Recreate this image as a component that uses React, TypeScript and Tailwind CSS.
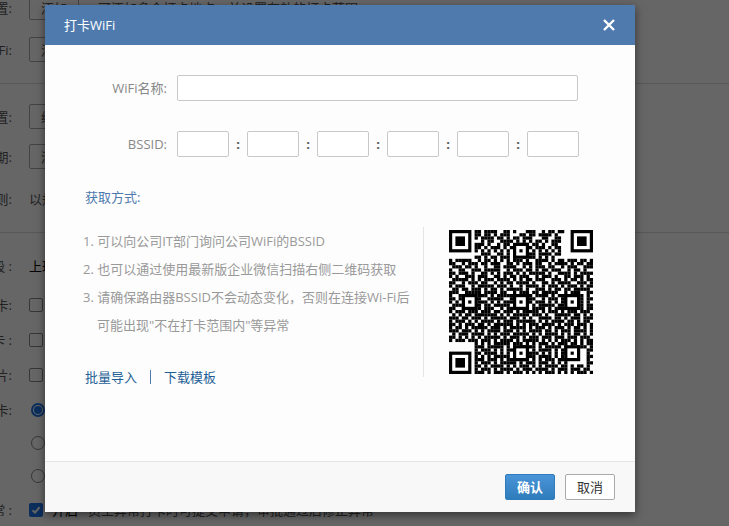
import React from "react";

const FONT = { fontFamily: '"Open Sans","Noto Sans CJK SC",sans-serif' };

const QR_ROWS = [
  "........##.####..##.#...###..#.##.##.........",
  "........##.##.#.###...##.##.####.#...........",
  "........#.####.##.#.##.###...##..##..........",
  "..........#.##..####.#.#.#.##.#.###..........",
  "........###.#..#.##...###.##.#..##...........",
  "........##.#.###.#.#..##.#.###.#.##..........",
  "........#.#.#.#.#.#.#.#.#.#.#.#.#.#..........",
  "..........###..##.#.###.###.####.##..........",
  "........##.#.##.###.#..#.##.#.#.#............",
  "#.#####..#.##.#.#.#.###.#..####.#.##.###.##.#",
  "##..#.###.##.###..##.#.###.##..#.####.#.##.##",
  ".###.##.#..#..##.####..#.#.###.##..#.###..###",
  "#..##..###.#####..#.###.##.#.##.###..#.##.#..",
  "##.###.#..##.#.#.###.#.#.#####.#..####.#.####",
  "#.#..###.###..##.#.##.###..#.###.#..##.###.#.",
  ".#####.#.#.###.####.#.#.##.###..###.#.##.#.##",
  "##..#.###.##..#.#.##.####.#..##.#.####..###.#",
  "#.###..#.#####.###.#..#.####.#.###.#.###.#.##",
  ".##.##.###.#.##.#.#####.#..###.#.##.##.#####.",
  "###..#####.####.##..#.###.##.#####..#.###..##",
  "#..##.#..###.#.#####.###.#.####.#.###.#.##.#.",
  "##.####.##..#####..#.#.####..#.###.##.####.##",
  "#.#..#.#.###.#.#.####..#.#.###.#.#.#####.#.#.",
  ".###.#####.##.#####.#.###.#.#####.##.#.###.##",
  "##..##.#.#.###..#.####.##.####.#.####.##.#.##",
  "#.###.###.###.##.###.#.#####.#.###.#.###.###.",
  ".#.#.##.#######.#.#.#####.###.#..#####.##.#.#",
  "###.##.###.#.#####.###.#.#..####.##.#.###.###",
  "#.###.#.#.####.#.###.######.#.#.####.##.#.##.",
  "##.#.###.##.#.######.#.#.###.####.#.###.###.#",
  "#.##.#.#####.###.#.#####.#.###.#.###.#.##.#.#",
  "###.###.#.#.####.###.#.#.####.##.#.###.####.#",
  ".#.###.####.#.#.###.#####.#.#.####.#.#.##.#.#",
  "##.#.#.#.#.#####.#.###.#.###.###.###.###.###.",
  "#.###.###.###.#.####.#.#####.#.#.#.###.#.#.##",
  "........#.#.#.#####.###.#.#.###.#.###.##.#.##",
  "........###.#####.#.#.#####.#.#####.#.#.###.#",
  "........#.###.#.#.###.#.#.#.####.#.###.....##",
  "........##.####.#.#.####.###.#.#.#.###.....#.",
  "........#.#.#.#####.#.#.###.####.#.#.#.....##",
  "........###.###.#.###.###.#.#.###.###......#.",
  "........#.###.#.#####.#.###.###.#.#.#......##",
  "........##.#.####.#.#.###.#.#.####.##.#.##.#.",
  "........#.###.#.####.#.###.####.#.###.###.##.",
  "........###.#.###.#.###.#.#.#.###.#.#.#.###.#",
];

function QrCode() {
  const rects: React.ReactElement[] = [];
  QR_ROWS.forEach((row, y) => {
    row.split("").forEach((c, x) => {
      if (c === "#") rects.push(<rect key={x + "-" + y} x={x} y={y} width={1.02} height={1.02} />);
    });
  });
  const finder = (x: number, y: number) => (
    <g key={x + "f" + y}>
      <rect x={x} y={y} width={7} height={7} />
      <rect x={x + 1} y={y + 1} width={5} height={5} fill="#fff" />
      <rect x={x + 2} y={y + 2} width={3} height={3} />
    </g>
  );
  const align = (x: number, y: number) => (
    <g key={x + "a" + y}>
      <rect x={x - 2} y={y - 2} width={5} height={5} />
      <rect x={x - 1} y={y - 1} width={3} height={3} fill="#fff" />
      <rect x={x} y={y} width={1} height={1} />
    </g>
  );
  return (
    <svg width="144" height="144" viewBox="0 0 45 45" fill="#000">
      {rects}
      {finder(0, 0)}
      {finder(38, 0)}
      {finder(0, 38)}
      {align(22, 6)}
      {align(6, 22)}
      {align(22, 22)}
      {align(38, 22)}
      {align(22, 38)}
      {align(38, 38)}
    </svg>
  );
}

function BgRow({ label, className, children }: { label: string; className?: string; children?: React.ReactNode }) {
  return (
    <div className={"flex items-center " + (className ?? "")}>
      <div className="w-[100px] -ml-[88px] shrink-0 text-right whitespace-nowrap">{label}</div>
      <div className="ml-[17px] flex items-center">{children}</div>
    </div>
  );
}

const bgButton = "flex h-[25px] w-[50px] items-center justify-center rounded-[2px] border border-[#aaa] bg-white";
const bgCheck = "block h-[14px] w-[14px] rounded-[2px] border border-[#888] bg-white";
const bgRadio = "ml-[2px] block h-[14px] w-[14px] rounded-full border border-[#888] bg-white";

function BackgroundPage() {
  return (
    <div className="-mt-[5px] text-[13px] leading-[20px] text-[#555]">
      <BgRow label="打卡位置:" className="h-[25px]">
        <span className={bgButton}>添加</span>
        <span className="ml-[19px] whitespace-nowrap">可添加多个打卡地点，并设置有效的打卡范围</span>
      </BgRow>
      <BgRow label="打卡WiFi:" className="mt-[17px] h-[25px]">
        <span className={bgButton}>添加</span>
      </BgRow>
      <div className="mt-[21px] h-px bg-[#ddd]" />
      <BgRow label="班次设置:" className="mt-[20px] h-[25px]">
        <span className={bgButton}>编辑</span>
      </BgRow>
      <BgRow label="特殊日期:" className="mt-[15px] h-[25px]">
        <span className={bgButton}>添加</span>
      </BgRow>
      <BgRow label="打卡规则:" className="mt-[20px] h-[20px]">
        <span className="whitespace-nowrap">以规则为准</span>
      </BgRow>
      <div className="mt-[23px] h-px bg-[#ddd]" />
      <BgRow label="时段 :" className="mt-[23px] h-[20px]">
        <span className="whitespace-nowrap text-black">上班</span>
      </BgRow>
      <BgRow label="外勤打卡:" className="mt-[22px] h-[14px]">
        <span className={bgCheck} />
      </BgRow>
      <BgRow label="补卡 :" className="mt-[21px] h-[14px]">
        <span className={bgCheck} />
      </BgRow>
      <BgRow label="拍照片:" className="mt-[21px] h-[14px]">
        <span className={bgCheck} />
      </BgRow>
      <BgRow label="迟到打卡:" className="mt-[21px] h-[14px]">
        <span className="ml-[2px] flex h-[14px] w-[14px] items-center justify-center rounded-full border-2 border-[#1d74e8] bg-white">
          <span className="h-[8px] w-[8px] rounded-full bg-[#1d74e8]" />
        </span>
      </BgRow>
      <BgRow label="" className="mt-[19px] h-[14px]">
        <span className={bgRadio} />
      </BgRow>
      <BgRow label="" className="mt-[19px] h-[14px]">
        <span className={bgRadio} />
      </BgRow>
      <BgRow label="异常 :" className="mt-[20px] h-[14px]">
        <span className="flex h-[14px] w-[14px] items-center justify-center rounded-[2px] bg-[#1d74e8]">
          <svg width="10" height="10" viewBox="0 0 10 10" fill="none" stroke="#fff" strokeWidth="2">
            <path d="M1.5 5.2 4 7.6 8.6 2.2" />
          </svg>
        </span>
        <span className="ml-[9px] whitespace-nowrap text-black">开启</span>
        <span className="ml-[10px] whitespace-nowrap">员工异常打卡时可提交申请，审批通过后修正异常</span>
      </BgRow>
    </div>
  );
}

function HexBox() {
  return <div className="h-[26px] w-[52px] rounded-[2px] border border-[#c8c8c8] bg-white" />;
}

export default function App() {
  return (
    <div className="relative h-[526px] w-[729px] overflow-hidden bg-white" style={FONT}>
      <BackgroundPage />
      {/* overlay */}
      <div className="absolute inset-0 bg-black/60" />
      {/* dialog */}
      <div className="absolute left-[45px] top-[5px] flex h-[507px] w-[590px] flex-col bg-[#fdfdfd] text-[13px] leading-[20px] shadow-[0_3px_9px_rgba(0,0,0,0.5)]">
        <div className="flex h-[40px] shrink-0 items-center justify-between bg-[#4e7aae] pl-[19px] pr-[20px] text-white">
          <span>打卡WiFi</span>
          <svg width="12" height="12" viewBox="0 0 12 12" stroke="#fff" strokeWidth="2.4" fill="none">
            <path d="M1 1 11 11M11 1 1 11" />
          </svg>
        </div>

        <div className="flex-1 pt-[30px] text-[#888]">
          <div className="flex h-[26px] items-center">
            <div className="w-[122px] text-right">WiFi名称:</div>
            <div className="ml-[10px] h-[26px] w-[401px] rounded-[2px] border border-[#c8c8c8] bg-white" />
          </div>
          <div className="mt-[30px] flex h-[26px] items-center">
            <div className="w-[122px] text-right">BSSID:</div>
            <div className="ml-[10px] flex items-center">
              {[0, 1, 2, 3, 4].map((i) => (
                <React.Fragment key={i}>
                  <HexBox />
                  <span className="w-[18px] text-center font-bold text-[#555]">:</span>
                </React.Fragment>
              ))}
              <HexBox />
            </div>
          </div>

          <div className="ml-[40px] mt-[30px] text-[#4e7aae]">获取方式:</div>

          <div className="ml-[38px] mt-[20px] flex">
            <div className="h-[150px] w-[341px] border-r border-[#e5e5e5] text-[#999] leading-[28px] whitespace-nowrap">
              <div>1. 可以向公司IT部门询问公司WiFi的BSSID</div>
              <div>2. 也可以通过使用最新版企业微信扫描右侧二维码获取</div>
              <div>3. 请确保路由器BSSID不会动态变化，否则在连接Wi-Fi后</div>
              <div className="pl-[14px]">可能出现"不在打卡范围内"等异常</div>
              <div className="ml-[2px] mt-[28px] flex h-[20px] items-center leading-[20px] text-[#1f5f96]">
                <span>批量导入</span>
                <span className="mx-[13px] h-[14px] w-px bg-[#4e7aae]" />
                <span>下载模板</span>
              </div>
            </div>
            <div className="ml-[25px] mt-[3px]">
              <QrCode />
            </div>
          </div>
        </div>

        <div className="flex h-[51px] shrink-0 items-start justify-end gap-[10px] border-t border-[#e5e5e5] bg-[#f8f8f8] pr-[20px] pt-[12px]">
          <div className="flex h-[26px] w-[50px] items-center justify-center rounded-[2px] border border-[#2e7cbb] bg-gradient-to-b from-[#4a94d8] to-[#2e7cbb] font-bold text-white">
            确认
          </div>
          <div className="flex h-[26px] w-[50px] items-center justify-center rounded-[2px] border border-[#aaa] bg-white text-[#333]">
            取消
          </div>
        </div>
      </div>
    </div>
  );
}
